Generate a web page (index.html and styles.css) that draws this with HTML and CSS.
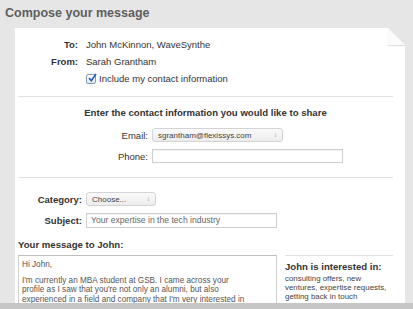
FILE: index.html
```html
<!DOCTYPE html>
<html lang="en">
<head>
    <meta charset="UTF-8">
    <title>Compose your message</title>
    <link rel="stylesheet" href="styles.css">
</head>
<body>
    <div class="page">
        <h1 class="page-title">Compose your message</h1>
        <div class="card">
            <div class="fold"></div>

            <div class="field-row">
                <span class="label">To:</span>
                <span class="value">John McKinnon, WaveSynthe</span>
            </div>
            <div class="field-row">
                <span class="label">From:</span>
                <span class="value">Sarah Grantham</span>
            </div>
            <div class="field-row">
                <span class="label"></span>
                <label class="check">
                    <span class="checkbox">
                        <svg width="10" height="10" viewBox="0 0 10 10">
                            <path d="M2 5 L4.3 7.6 L9 1" fill="none" stroke="#1f5fb8" stroke-width="1.6"/>
                        </svg>
                    </span>
                    Include my contact information
                </label>
            </div>

            <hr class="divider first">

            <h2 class="share-title">Enter the contact information you would like to share</h2>
            <div class="share-row email-row">
                <span class="share-label">Email:</span>
                <div class="select email-select">
                    <span>sgrantham@flexissys.com</span>
                    <span class="arrows">&#x2195;</span>
                </div>
            </div>
            <div class="share-row phone-row">
                <span class="share-label">Phone:</span>
                <div class="text-input phone-input"></div>
            </div>

            <hr class="divider second">

            <div class="form-row category-row">
                <span class="form-label">Category:</span>
                <div class="select category-select">
                    <span>Choose...</span>
                    <span class="arrows">&#x2195;</span>
                </div>
            </div>
            <div class="form-row subject-row">
                <span class="form-label">Subject:</span>
                <div class="text-input subject-input">Your expertise in the tech industry</div>
            </div>

            <h3 class="message-title">Your message to John:</h3>
            <div class="message-area">
                <div class="message-box">
                    <p>Hi John,</p>
                    <p>I'm currently an MBA student at GSB. I came across your<br>
                    profile as I saw that you're not only an alumni, but also<br>
                    experienced in a field and company that I'm very interested in</p>
                </div>
                <div class="interests">
                    <h4>John is interested in:</h4>
                    <p>consulting offers, new<br>ventures, expertise requests,<br>getting back in touch</p>
                </div>
            </div>
        </div>
    </div>
    <div class="bottom-bar"></div>
</body>
</html>
```

FILE: styles.css
```css
html, body {
    margin: 0;
    height: 309px;
    overflow: hidden;
}
body {
    display: flex;
    flex-direction: column;
    background-color: #e6e6e6;
    font-family: "Liberation Sans", Arial, sans-serif;
    font-size: 9.5px;
    color: #333;
}
.page {
    flex: 1;
    overflow: hidden;
}
.page-title {
    margin: 0;
    padding: 6px 0 0 5px;
    height: 22px;
    font-size: 12.5px;
    font-weight: bold;
    color: #5e5e5e;
}
.card {
    position: relative;
    margin-left: 15px;
    width: 375px;
    padding: 8px 12px 0 3px;
    height: 400px;
    background-color: #fff;
    clip-path: polygon(0 0, 373px 0, 390px 17px, 390px 100%, 0 100%);
}
.fold {
    position: absolute;
    top: 0;
    right: 0;
    width: 17px;
    height: 17px;
    background: linear-gradient(to top right, #fbfbfb 50%, transparent 50%);
    box-shadow: 0 1px 1px rgba(0, 0, 0, 0.12);
}

/* to / from */
.field-row {
    display: flex;
    align-items: center;
    height: 17px;
}
.label {
    width: 60px;
    text-align: right;
    font-weight: bold;
}
.value, .check {
    margin-left: 8px;
}
.check {
    display: flex;
    align-items: center;
}
.checkbox {
    display: inline-flex;
    width: 8px;
    height: 8px;
    margin-right: 3px;
    border: 1px solid #8a9ab5;
    border-radius: 2px;
    background: linear-gradient(#fff, #dfe6f2);
    position: relative;
}
.checkbox svg {
    position: absolute;
    left: 0;
    top: -2px;
}

.divider {
    margin: 0;
    border: none;
    border-top: 1px solid #e2e2e2;
}
.divider.first {
    margin-top: 9px;
}
.divider.second {
    margin-top: 14px;
}

/* contact sharing */
.share-title {
    margin: 8px 0 0;
    height: 16px;
    line-height: 16px;
    font-size: 9.6px;
    text-align: center;
}
.share-row {
    display: flex;
    align-items: center;
}
.email-row {
    margin-top: 7px;
}
.phone-row {
    margin-top: 7px;
}
.share-label {
    width: 130px;
    text-align: right;
    margin-right: 4px;
}
.select {
    display: flex;
    align-items: center;
    justify-content: space-between;
    box-sizing: border-box;
    height: 14px;
    padding: 0 5px;
    border: 1px solid #d4d4d4;
    border-radius: 3px;
    background: linear-gradient(#fafafa, #ececec);
    font-size: 8px;
    color: #444;
}
.arrows {
    font-size: 6px;
    color: #999;
}
.email-select {
    width: 131px;
}
.text-input {
    box-sizing: border-box;
    height: 14px;
    border: 1px solid #cfcfcf;
    box-shadow: inset 0 1px 1px rgba(0, 0, 0, 0.06);
    background-color: #fff;
}
.phone-input {
    width: 191px;
}

/* category / subject */
.form-row {
    display: flex;
    align-items: center;
}
.category-row {
    margin-top: 14px;
}
.subject-row {
    margin-top: 7px;
}
.form-label {
    width: 64px;
    text-align: right;
    margin-right: 4px;
    font-weight: bold;
}
.category-select {
    width: 70px;
}
.subject-input {
    width: 191px;
    height: 15px;
    padding: 0 4px;
    line-height: 13px;
    font-size: 8.6px;
    color: #666;
}

/* message */
.message-title {
    margin: 10px 0 0;
    height: 14px;
    line-height: 14px;
    font-size: 9.6px;
}
.message-area {
    display: flex;
    align-items: flex-start;
    margin-top: 3px;
}
.message-box {
    box-sizing: border-box;
    width: 259px;
    height: 80px;
    padding: 4px 3px;
    border: 1px solid #cfcfcf;
    border-top-color: #bdbdbd;
    font-size: 8.2px;
    line-height: 9.5px;
    color: #555;
    white-space: nowrap;
    overflow: hidden;
}
.message-box p {
    margin: 0 0 6px;
}
.interests {
    flex: 1;
    margin-left: 8px;
    padding-top: 5px;
    border-top: 1px solid #e2e2e2;
}
.interests h4 {
    margin: 0 0 2px;
    font-size: 9.6px;
    color: #333;
}
.interests p {
    margin: 0;
    font-size: 7.9px;
    line-height: 9px;
    color: #444;
}

.bottom-bar {
    height: 6px;
    background-color: #c6c6c6;
}
```
